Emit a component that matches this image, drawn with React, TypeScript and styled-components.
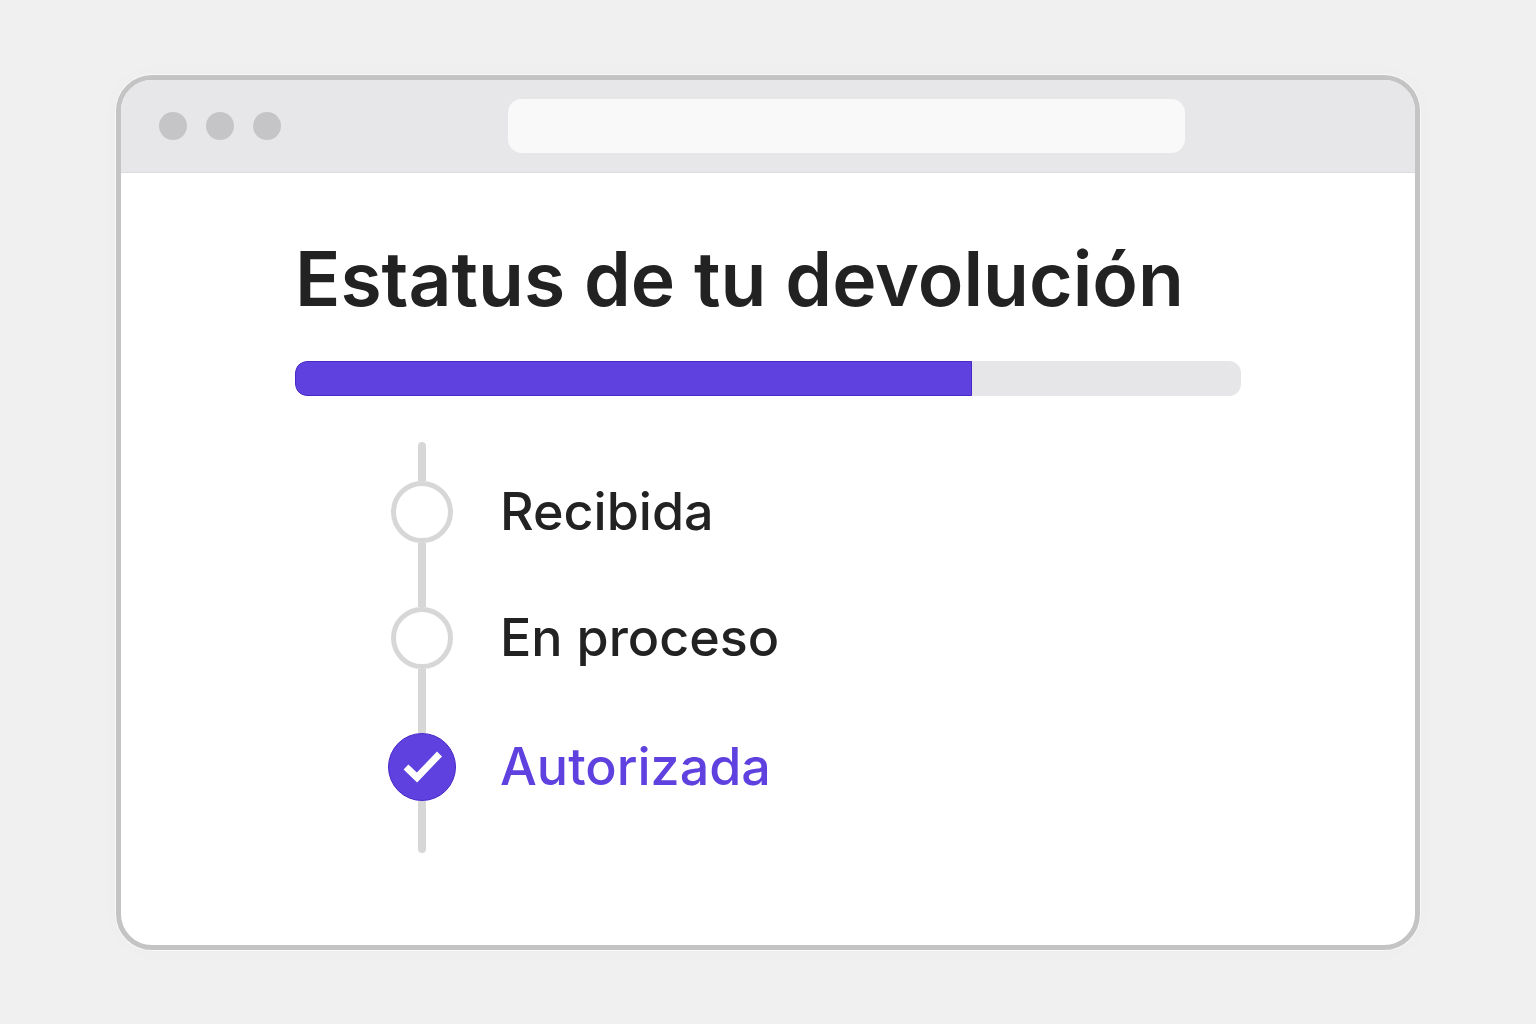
import React from "react";
import styled, { createGlobalStyle } from "styled-components";

const colors = {
  page: "#f0f0f0",
  frame: "#c4c4c5",
  chrome: "#e7e7e9",
  dot: "#c5c5c7",
  address: "#f9f9f9",
  ink: "#222222",
  accent: "#5f41e0",
  accentEdge: "#4a28c8",
  track: "#e6e6e8",
  line: "#d7d7d7",
};

const GlobalStyle = createGlobalStyle`
  *, *::before, *::after { box-sizing: border-box; }
  body {
    margin: 0;
    background: ${colors.page};
    color: ${colors.ink};
    font-family: Inter, "Liberation Sans", sans-serif;
  }
`;

const Page = styled.div`
  display: flex;
  min-height: 100vh;
  padding: 75px 116px 74px;
`;

const BrowserWindow = styled.div`
  flex: 1;
  display: flex;
  flex-direction: column;
  overflow: hidden;
  border: 5px solid ${colors.frame};
  border-radius: 36px;
  background: #ffffff;
  box-shadow: 0 0 0 1px #f8f8f8, 0 0 24px rgba(0, 0, 0, 0.02);
`;

const Toolbar = styled.header`
  display: flex;
  align-items: center;
  gap: 227px;
  height: 93px;
  padding: 0 230px 0 38px;
  background: ${colors.chrome};
  border-bottom: 1px solid #dcdcdd;
`;

const Dots = styled.div`
  display: flex;
  gap: 19px;
`;

const Dot = styled.span`
  width: 28px;
  height: 28px;
  border-radius: 50%;
  background: ${colors.dot};
`;

const AddressBar = styled.input`
  flex: 1;
  min-width: 0;
  height: 54px;
  padding: 0 20px;
  border: 0;
  border-radius: 14px;
  background: ${colors.address};
  color: ${colors.ink};
  font: 500 20px Inter, sans-serif;
`;

const Content = styled.main`
  width: 100%;
  max-width: 946px;
  margin: 0 auto;
  padding: 61px 0 80px;
`;

const Title = styled.h1`
  margin: 0;
  font-size: 75px;
  font-weight: 600;
  line-height: 90px;
  white-space: nowrap;
`;

const ProgressTrack = styled.div`
  height: 35px;
  margin-top: 37px;
  overflow: hidden;
  border-radius: 12px;
  background: ${colors.track};
`;

const ProgressFill = styled.div`
  height: 100%;
  border: 1px solid ${colors.accentEdge};
  border-radius: 12px 0 0 12px;
  background: ${colors.accent};
`;

const Timeline = styled.ol`
  display: flex;
  flex-direction: column;
  margin: 46px 0 0;
  padding: 0 0 0 93px;
  list-style: none;
`;

const Step = styled.li`
  display: grid;
  grid-template-columns: 68px auto;
  column-gap: 44px;
  justify-content: start;
  justify-items: center;
  align-items: center;
`;

const Connector = styled.span<{ $length: number; $cap?: "start" | "end" }>`
  grid-column: 1;
  width: 8px;
  height: ${(p) => p.$length}px;
  border-radius: ${(p) =>
    p.$cap === "start" ? "4px 4px 0 0" : p.$cap === "end" ? "0 0 4px 4px" : "0"};
  background: ${colors.line};
`;

const Ring = styled.span`
  grid-column: 1;
  width: 62px;
  height: 62px;
  border: 5px solid ${colors.line};
  border-radius: 50%;
  background: #ffffff;
`;

const DoneMark = styled.span`
  grid-column: 1;
  display: flex;
  width: 68px;
  height: 68px;
  border: 1px solid ${colors.accentEdge};
  border-radius: 50%;
  background: ${colors.accent};
`;

const StepLabel = styled.span<{ $active?: boolean }>`
  justify-self: start;
  font-size: 52px;
  font-weight: 500;
  line-height: 62px;
  white-space: nowrap;
  color: ${(p) => (p.$active ? colors.accent : colors.ink)};
`;

const steps = [
  { label: "Recibida", done: false },
  { label: "En proceso", done: false },
  { label: "Autorizada", done: true },
];

const progress = 71.6;

function CheckIcon() {
  return (
    <svg viewBox="0 0 66 66" width="66" height="66" aria-hidden="true">
      <path d="M17 33 L28 43.5 L50.5 20" fill="none" stroke="#ffffff" strokeWidth="7" />
    </svg>
  );
}

export default function App() {
  return (
    <>
      <GlobalStyle />
      <Page>
        <BrowserWindow>
          <Toolbar>
            <Dots aria-hidden="true">
              <Dot />
              <Dot />
              <Dot />
            </Dots>
            <AddressBar type="text" aria-label="Dirección" />
          </Toolbar>
          <Content>
            <Title>Estatus de tu devolución</Title>
            <ProgressTrack
              role="progressbar"
              aria-label="Estatus de tu devolución"
              aria-valuemin={0}
              aria-valuemax={100}
              aria-valuenow={progress}
            >
              <ProgressFill style={{ width: `${progress}%` }} />
            </ProgressTrack>
            <Timeline>
              {steps.map((step, i) => {
                const last = i === steps.length - 1;
                return (
                  <Step key={step.label} aria-current={step.done ? "step" : undefined}>
                    {i === 0 && <Connector $length={39} $cap="start" />}
                    {step.done ? (
                      <DoneMark>
                        <CheckIcon />
                      </DoneMark>
                    ) : (
                      <Ring />
                    )}
                    <StepLabel $active={step.done}>{step.label}</StepLabel>
                    <Connector $length={last ? 52 : 64} $cap={last ? "end" : undefined} />
                  </Step>
                );
              })}
            </Timeline>
          </Content>
        </BrowserWindow>
      </Page>
    </>
  );
}
